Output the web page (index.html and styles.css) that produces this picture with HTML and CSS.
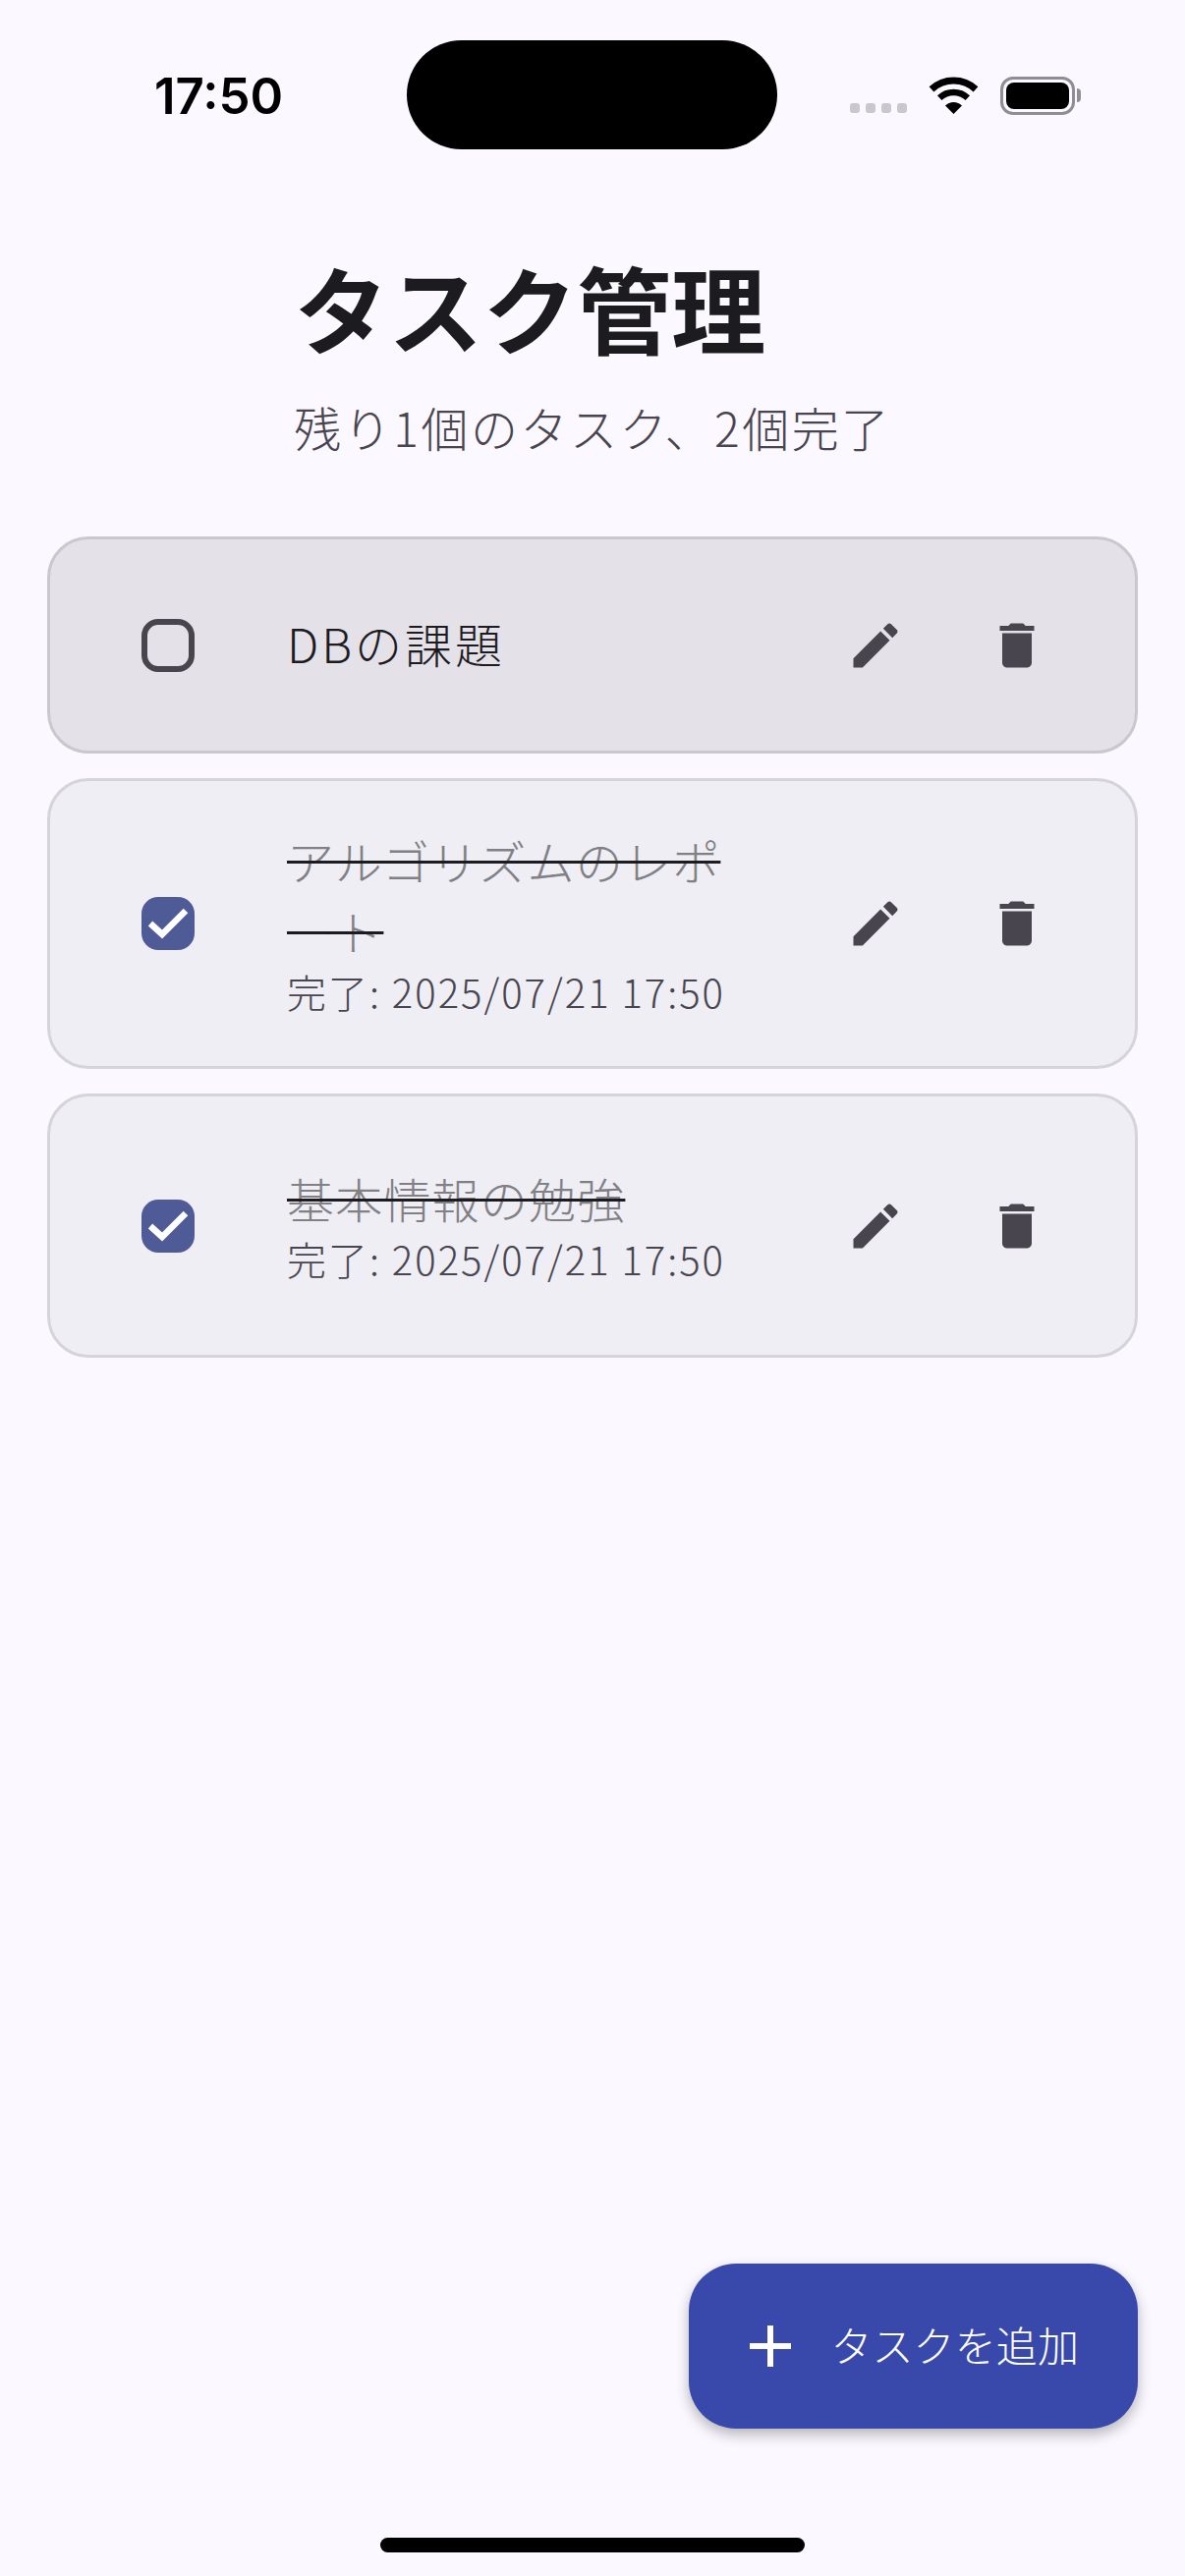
FILE: index.html
```html
<!DOCTYPE html>
<html lang="ja">
<head>
  <meta charset="UTF-8">
  <title>タスク管理</title>
  <link rel="stylesheet" href="styles.css">
</head>
<body>
  <div class="page">
    <!-- Status bar -->
    <div class="status-bar">
      <div class="status-time">17:50</div>
      <div class="island"></div>
      <div class="status-icons">
        <div class="signal"><span></span><span></span><span></span><span></span></div>
        <svg class="wifi" width="51" height="38" viewBox="0 0 51 38">
          <path d="M3 12.9A33 33 0 0 1 48 12.9" fill="none" stroke="#000" stroke-width="7"/>
          <path d="M11.2 21.6A21 21 0 0 1 39.8 21.6" fill="none" stroke="#000" stroke-width="6.5"/>
          <path d="M25.5 38L17 29.5A12 12 0 0 1 34 29.5Z" fill="#000"/>
        </svg>
        <div class="battery"><div class="battery-level"></div></div>
        <div class="battery-cap"></div>
      </div>
    </div>

    <header class="header">
      <div class="header-inner">
        <h1 class="title">タスク管理</h1>
        <p class="subtitle">残り1個のタスク、2個完了</p>
      </div>
    </header>

    <ul class="task-list">
      <li class="task task-open">
        <div class="check"></div>
        <div class="task-body">
          <div class="task-name">DBの課題</div>
        </div>
        <button class="icon-btn" type="button">
          <svg width="60" height="60" viewBox="0 0 24 24"><path d="M3 17.25V21h3.75L17.81 9.94l-3.75-3.75L3 17.25zM20.71 7.04c.39-.39.39-1.02 0-1.41l-2.34-2.34c-.39-.39-1.02-.39-1.41 0l-1.83 1.83 3.75 3.75 1.83-1.83z"/></svg>
        </button>
        <button class="icon-btn" type="button">
          <svg width="60" height="60" viewBox="0 0 24 24"><path d="M6 19c0 1.1.9 2 2 2h8c1.1 0 2-.9 2-2V7H6v12zM19 4h-3.5l-1-1h-5l-1 1H5v2h14V4z"/></svg>
        </button>
      </li>

      <li class="task task-done">
        <div class="check check-on">
          <svg width="54" height="54" viewBox="0 0 54 54"><path d="M9 27L21 38L45 14" fill="none" stroke="#fff" stroke-width="6.5"/></svg>
        </div>
        <div class="task-body">
          <div class="task-name">アルゴリズムのレポート</div>
          <div class="task-date">完了: 2025/07/21 17:50</div>
        </div>
        <button class="icon-btn" type="button">
          <svg width="60" height="60" viewBox="0 0 24 24"><path d="M3 17.25V21h3.75L17.81 9.94l-3.75-3.75L3 17.25zM20.71 7.04c.39-.39.39-1.02 0-1.41l-2.34-2.34c-.39-.39-1.02-.39-1.41 0l-1.83 1.83 3.75 3.75 1.83-1.83z"/></svg>
        </button>
        <button class="icon-btn" type="button">
          <svg width="60" height="60" viewBox="0 0 24 24"><path d="M6 19c0 1.1.9 2 2 2h8c1.1 0 2-.9 2-2V7H6v12zM19 4h-3.5l-1-1h-5l-1 1H5v2h14V4z"/></svg>
        </button>
      </li>

      <li class="task task-done task-short">
        <div class="check check-on">
          <svg width="54" height="54" viewBox="0 0 54 54"><path d="M9 27L21 38L45 14" fill="none" stroke="#fff" stroke-width="6.5"/></svg>
        </div>
        <div class="task-body">
          <div class="task-name">基本情報の勉強</div>
          <div class="task-date">完了: 2025/07/21 17:50</div>
        </div>
        <button class="icon-btn" type="button">
          <svg width="60" height="60" viewBox="0 0 24 24"><path d="M3 17.25V21h3.75L17.81 9.94l-3.75-3.75L3 17.25zM20.71 7.04c.39-.39.39-1.02 0-1.41l-2.34-2.34c-.39-.39-1.02-.39-1.41 0l-1.83 1.83 3.75 3.75 1.83-1.83z"/></svg>
        </button>
        <button class="icon-btn" type="button">
          <svg width="60" height="60" viewBox="0 0 24 24"><path d="M6 19c0 1.1.9 2 2 2h8c1.1 0 2-.9 2-2V7H6v12zM19 4h-3.5l-1-1h-5l-1 1H5v2h14V4z"/></svg>
        </button>
      </li>
    </ul>

    <button class="fab" type="button">
      <svg width="72" height="72" viewBox="0 0 24 24"><path d="M19 13h-6v6h-2v-6H5v-2h6V5h2v6h6v2z" fill="#fff"/></svg>
      <span class="fab-label">タスクを追加</span>
    </button>

    <div class="home-bar"></div>
  </div>
</body>
</html>
```

FILE: styles.css
```css
* {
  box-sizing: border-box;
}

body {
  margin: 0;
  background: #fbf9ff;
  font-family: "Noto Sans CJK JP", "Noto Sans", sans-serif;
  color: #1c1b1f;
}

.page {
  display: flex;
  flex-direction: column;
  height: 2622px;
  padding: 0 48px;
  overflow: hidden;
}

/* Status bar */
.status-bar {
  display: flex;
  align-items: center;
  height: 111px;
  margin-top: 41px;
}

.status-time {
  width: 366px;
  padding-left: 109px;
  font-family: Inter, sans-serif;
  font-size: 51px;
  font-weight: 600;
  color: #000;
  margin-top: 2px;
}

.island {
  width: 377px;
  height: 111px;
  border-radius: 56px;
  background: #000;
}

.status-icons {
  display: flex;
  align-items: center;
  margin-left: 74px;
  margin-top: 1px;
}

.signal {
  display: flex;
  gap: 6px;
  margin-top: 25px;
  margin-right: 22px;
}

.signal span {
  width: 10px;
  height: 10px;
  border-radius: 3px;
  background: #c9c8cd;
}

.battery {
  width: 76px;
  height: 39px;
  margin-left: 22px;
  padding: 3px;
  border: 3px solid #8f8e94;
  border-radius: 13px;
}

.battery-level {
  width: 100%;
  height: 100%;
  border-radius: 8px;
  background: #000;
}

.battery-cap {
  width: 4px;
  height: 14px;
  margin-left: 2px;
  border-radius: 0 4px 4px 0;
  background: #8f8e94;
}

/* Header */
.header {
  display: flex;
  justify-content: center;
  margin-top: 92px;
}

.title {
  margin: 0;
  font-size: 96px;
  font-weight: 700;
  line-height: 136px;
}

.subtitle {
  margin: 20px 0 0;
  font-size: 48px;
  font-weight: 300;
  line-height: 68px;
  color: #49454f;
  letter-spacing: 2.5px;
}

/* Task list */
.task-list {
  display: flex;
  flex-direction: column;
  gap: 25px;
  margin: 78px 0 0;
  padding: 0;
  list-style: none;
}

.task {
  display: flex;
  align-items: center;
  padding: 47px 48px 47px 93px;
  border: 3px solid #d5d4da;
  border-radius: 42px;
  background: #eeeef4;
}

.task-open {
  min-height: 221px;
  border-color: #cac8cf;
  background: #e4e2e8;
}

.task-short {
  min-height: 269px;
}

.check {
  flex: none;
  width: 54px;
  height: 54px;
  margin-right: 94px;
  border: 6px solid #49454f;
  border-radius: 17px;
}

.check-on {
  border: 0;
  background: #4f5b97;
}

.check-on svg {
  display: block;
}

.task-body {
  flex: 1;
  min-width: 0;
  margin: -3px 0 3px;
  padding-right: 48px;
}

.task-name {
  font-size: 48px;
  font-weight: 300;
  line-height: 72px;
  letter-spacing: 1.2px;
  line-break: loose;
}

.task-open .task-name {
  letter-spacing: 3px;
}

.task-done .task-name {
  color: #808085;
  text-decoration: line-through;
  text-decoration-color: #1c1b1f;
  text-decoration-thickness: 3px;
}

.task-date {
  font-size: 40px;
  font-weight: 300;
  line-height: 52px;
  letter-spacing: 2px;
  color: #49454f;
  white-space: nowrap;
}

.icon-btn {
  flex: none;
  display: flex;
  align-items: center;
  justify-content: center;
  width: 144px;
  height: 100px;
  padding: 0;
  border: 0;
  background: none;
  fill: #49454f;
}

/* Add button */
.fab {
  display: flex;
  align-items: center;
  align-self: flex-end;
  gap: 25px;
  height: 168px;
  margin-top: auto;
  padding: 0 60px 0 47px;
  border: 0;
  border-radius: 48px;
  background: #3949ab;
  box-shadow: 0 6px 14px rgba(0, 0, 0, 0.28);
  font-family: inherit;
}

.fab-label {
  margin-top: -6px;
  font-size: 42px;
  font-weight: 300;
  color: #fff;
  letter-spacing: 0.1px;
}

.home-bar {
  flex: none;
  align-self: center;
  width: 432px;
  height: 15px;
  margin: 111px 0 24px;
  border-radius: 8px;
  background: #000;
}
```
